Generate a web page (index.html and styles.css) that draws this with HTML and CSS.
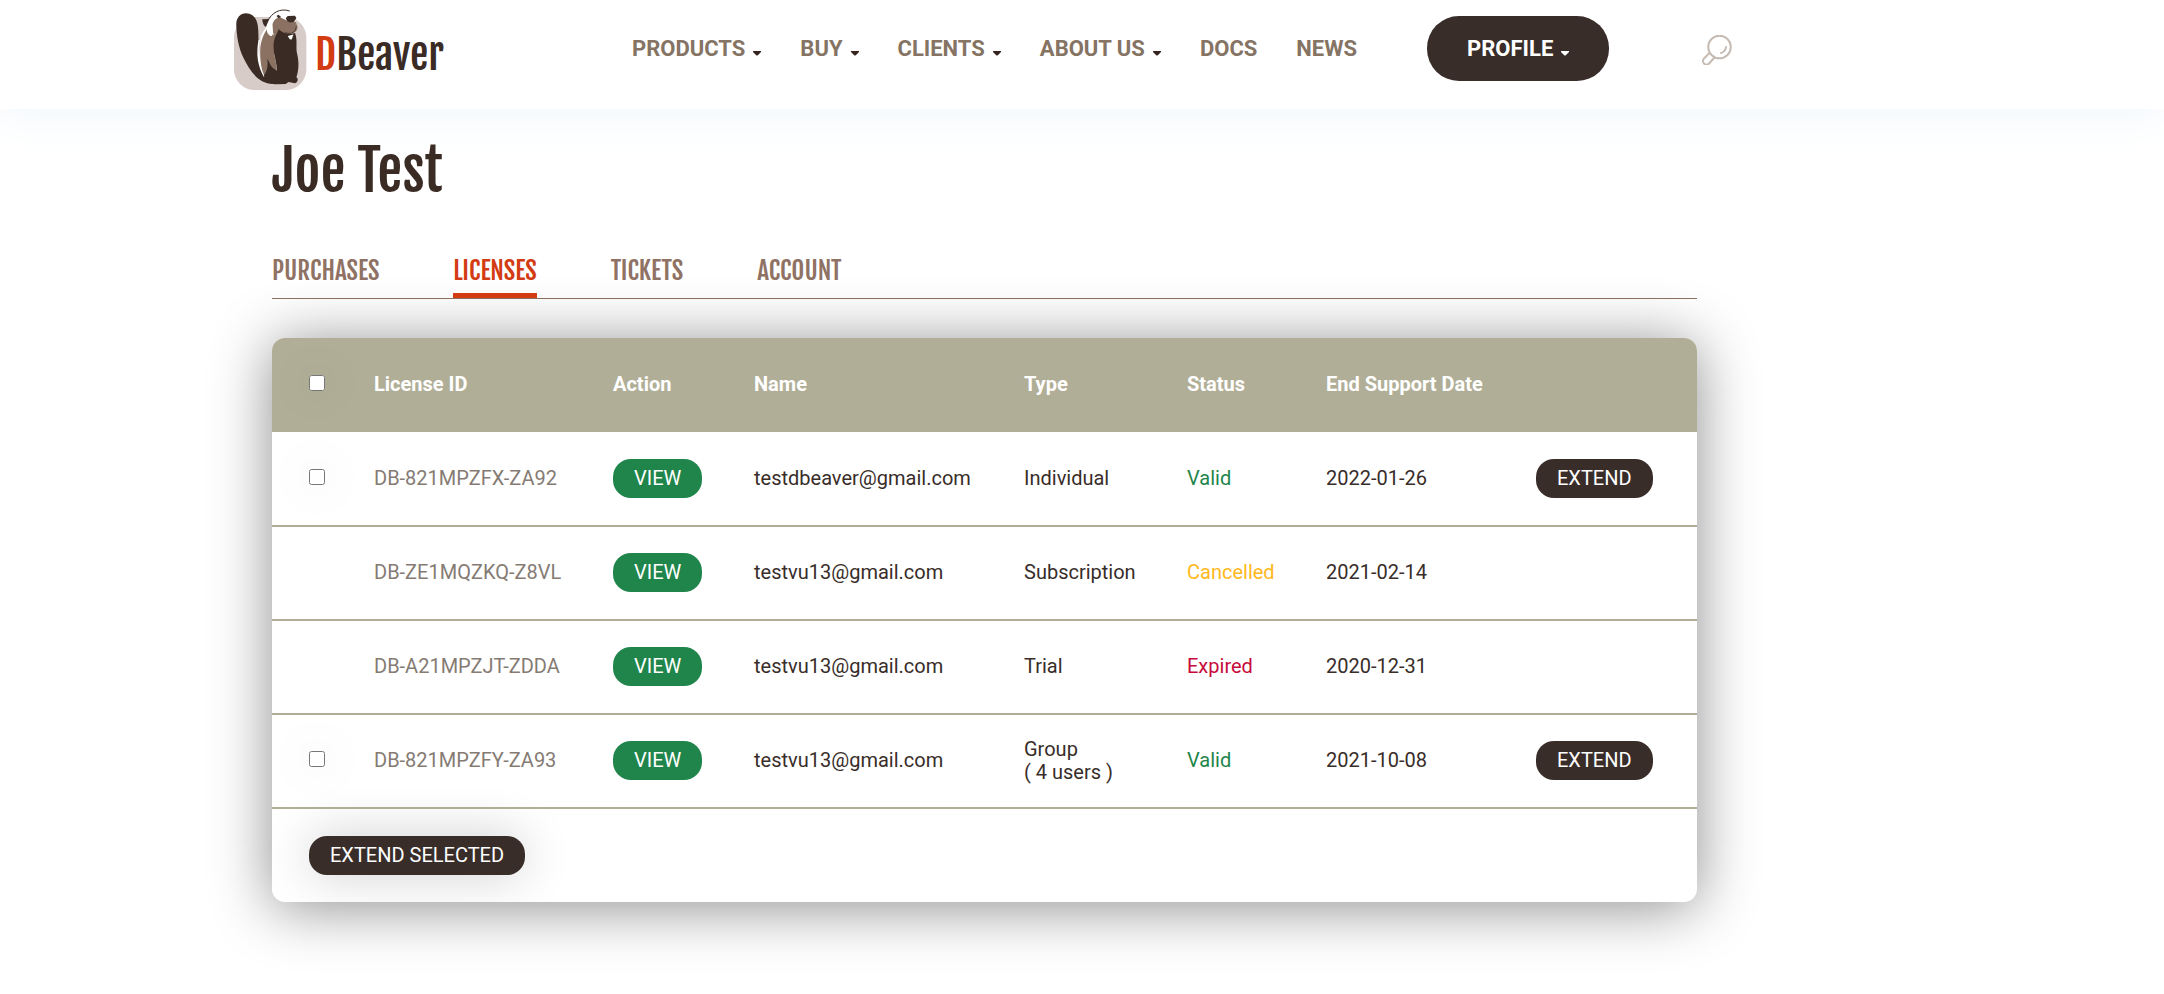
FILE: index.html
```html
<!DOCTYPE html>
<html lang="en">
<head>
<meta charset="utf-8">
<title>DBeaver - Licenses</title>
<link rel="stylesheet" href="styles.css">
</head>
<body>
<header class="site-header">
  <a class="logo" href="#" aria-label="DBeaver">
    <svg class="logo-mark" viewBox="42 24 220 248" aria-hidden="true">
      <rect x="42" y="50" width="218" height="220" rx="62" fill="#d8ccc8"/>
      <path d="M122 110C128 96 136 86 140 78C150 50 170 30 200 29L226 46L230 90L200 106L170 110L130 220L116 200Z" fill="#fff"/>
      <path d="M143 62C156 38 180 22 210 32" fill="none" stroke="#3a2b25" stroke-width="3"/>
      <path d="M127 57L148 56L138 80C131 76 128 68 127 57Z" fill="#3a2b25"/>
      <path d="M49 78C47 54 60 39 78 39C98 40 109 52 113 72C117 94 115 118 117 132C112 160 114 190 134 226L160 252C110 250 88 206 70 172C56 144 50 108 49 78Z" fill="#3a2b25"/>
      <path d="M118 120C110 160 114 196 134 230" fill="none" stroke="#fff" stroke-width="4"/>
      <path d="M143 84C130 104 122 124 121 150C120 186 126 214 136 232L150 200L180 100C158 106 146 104 143 84Z" fill="#8a7162"/>
      <path d="M158 72C162 58 172 50 184 52L204 62L228 64L233 78C236 92 222 100 208 102L190 104L170 108L160 100Z" fill="#8a7162"/>
      <path d="M177 86C172 100 162 112 161 136C160 164 172 186 171 212C160 200 150 190 142 176C146 200 140 216 132 226C138 244 150 252 172 253L198 252L206 246L226 250C236 246 236 236 230 232C238 210 238 184 232 160C228 140 234 120 226 98C214 102 190 102 177 86Z" fill="#3a2b25"/>
      <path d="M151 62C142 80 141 98 154 104" fill="none" stroke="#fff" stroke-width="7" stroke-linecap="round"/>
      <path d="M148 150C142 172 146 200 170 210C172 190 160 164 160 136Z" fill="#8a7162"/>
      <path d="M198 54L204 47L226 46L230 54L222 65L211 67L202 62Z" fill="#3a2b25"/>
      <path d="M170 47L176 43L184 50L176 54Z" fill="#3a2b25"/>
      <path d="M196 96C206 102 218 100 226 92L230 78" fill="none" stroke="#3a2b25" stroke-width="2"/>
      <path d="M204 107L221 103L216 118L210 117Z" fill="#fff"/>
    </svg>
    <span class="logo-text"><span class="logo-accent">D</span>Beaver</span>
  </a>
  <nav class="main-nav">
    <a href="#">PRODUCTS<svg class="caret" viewBox="0 0 8 5"><path d="M0 0h8v1L5 4a1.400 1.400 0 0 1-2 0L0 1z"/></svg></a>
    <a href="#">BUY<svg class="caret" viewBox="0 0 8 5"><path d="M0 0h8v1L5 4a1.400 1.400 0 0 1-2 0L0 1z"/></svg></a>
    <a href="#">CLIENTS<svg class="caret" viewBox="0 0 8 5"><path d="M0 0h8v1L5 4a1.400 1.400 0 0 1-2 0L0 1z"/></svg></a>
    <a href="#">ABOUT US<svg class="caret" viewBox="0 0 8 5"><path d="M0 0h8v1L5 4a1.400 1.400 0 0 1-2 0L0 1z"/></svg></a>
    <a href="#">DOCS</a>
    <a href="#">NEWS</a>
  </nav>
  <button class="profile" type="button">PROFILE<svg class="caret" viewBox="0 0 8 5"><path d="M0 0h8v1L5 4a1.400 1.400 0 0 1-2 0L0 1z"/></svg></button>
  <button class="search" type="button" aria-label="Search">
    <svg viewBox="0 0 30 30" fill="none" stroke="#c6bbb2" stroke-width="2"><circle cx="17.500" cy="12" r="11.300"/><path d="M24 12a7 7 0 0 1-5 6" stroke-linecap="round"/><path d="M7.500 18L2 23.500a3.500 3.500 0 0 0 5 5l5.500-6"/></svg>
  </button>
</header>
<main class="page">
  <h1 class="title">Joe Test</h1>
  <nav class="tabs">
    <a href="#">PURCHASES</a>
    <a href="#" class="active" aria-current="page">LICENSES</a>
    <a href="#">TICKETS</a>
    <a href="#">ACCOUNT</a>
  </nav>
  <section class="card">
    <table class="licenses">
      <colgroup><col class="c-check"><col class="c-id"><col class="c-action"><col class="c-name"><col class="c-type"><col class="c-status"><col class="c-date"><col class="c-extend"></colgroup>
      <thead>
        <tr><th><input type="checkbox" aria-label="Select all licenses"></th><th>License ID</th><th>Action</th><th>Name</th><th>Type</th><th>Status</th><th>End Support Date</th><th></th></tr>
      </thead>
      <tbody>
        <tr><td><input type="checkbox" aria-label="Select DB-821MPZFX-ZA92"></td><td class="id">DB-821MPZFX-ZA92</td><td><button class="pill view" type="button">VIEW</button></td><td>testdbeaver@gmail.com</td><td>Individual</td><td class="valid">Valid</td><td>2022-01-26</td><td><button class="pill" type="button">EXTEND</button></td></tr>
        <tr><td></td><td class="id">DB-ZE1MQZKQ-Z8VL</td><td><button class="pill view" type="button">VIEW</button></td><td>testvu13@gmail.com</td><td>Subscription</td><td class="cancelled">Cancelled</td><td>2021-02-14</td><td></td></tr>
        <tr><td></td><td class="id">DB-A21MPZJT-ZDDA</td><td><button class="pill view" type="button">VIEW</button></td><td>testvu13@gmail.com</td><td>Trial</td><td class="expired">Expired</td><td>2020-12-31</td><td></td></tr>
        <tr><td><input type="checkbox" aria-label="Select DB-821MPZFY-ZA93"></td><td class="id">DB-821MPZFY-ZA93</td><td><button class="pill view" type="button">VIEW</button></td><td>testvu13@gmail.com</td><td>Group<br>( 4 users )</td><td class="valid">Valid</td><td>2021-10-08</td><td><button class="pill" type="button">EXTEND</button></td></tr>
      </tbody>
      <tfoot>
        <tr><td colspan="8"><button class="pill raised" type="button">EXTEND SELECTED</button></td></tr>
      </tfoot>
    </table>
  </section>
</main>
</body>
</html>
```
FILE: styles.css
```css
* { box-sizing: border-box; }

body {
  min-height: 100vh;
  margin: 0;
  background: #fff;
  color: #382d29;
  font-family: Roboto, "Liberation Sans", sans-serif;
  font-size: 20px;
  line-height: 23px;
}

a { text-decoration: none; }

button {
  border: 0;
  cursor: pointer;
  font-family: inherit;
  font-size: inherit;
  line-height: inherit;
}

.site-header {
  display: flex;
  align-items: flex-start;
  height: 109px;
  padding-left: 234px;
  box-shadow: 0 0 50px #ecf3fa;
}

.logo {
  display: flex;
  gap: 8px;
  width: 398px;
  padding-top: 8px;
}

.logo-mark { width: 73px; height: 83px; }

.logo-text {
  padding-top: 27px;
  color: #3a2b25;
  font-family: "Fjalla One", Roboto, sans-serif;
  font-size: 41px;
  line-height: 40px;
}

.logo-accent { color: #d33b12; }

.main-nav {
  display: flex;
  gap: 39px;
  padding-top: 35px;
}

.main-nav a {
  color: #857363;
  font-size: 22px;
  font-weight: 700;
  line-height: 28px;
}

.caret {
  width: 8px;
  height: 5px;
  margin-left: 8px;
  fill: #38231f;
}

.profile {
  height: 65px;
  margin: 16px 0 0 70px;
  padding: 0 40px;
  border-radius: 32px;
  background: #382d29;
  color: #fff;
  font-size: 22px;
  font-weight: 700;
}

.profile .caret { fill: #fff; }

.search {
  width: 30px;
  height: 30px;
  margin: 35px 0 0 93px;
  padding: 0;
  background: none;
}

.search svg { display: block; }

.page {
  max-width: 1697px;
  padding: 28px 0 92px 272px;
}

.title {
  margin: 0;
  color: #3a2b25;
  font-family: "Fjalla One", Roboto, sans-serif;
  font-size: 56px;
  font-weight: 400;
  line-height: 68px;
}

.tabs {
  display: flex;
  gap: 74px;
  margin-top: 47px;
  border-bottom: 1px solid #8f7264;
}

.tabs a {
  padding-bottom: 3px;
  border-bottom: 5px solid transparent;
  color: #8f7264;
  font-family: "Fjalla One", Roboto, sans-serif;
  font-size: 25px;
  line-height: 38px;
}

.tabs .active { border-color: #d33b12; color: #d33b12; }

.card {
  margin-top: 39px;
  overflow: hidden;
  border-radius: 13px;
  background: #fff;
  box-shadow: 0 5px 60px rgba(0, 0, 0, 0.45);
}

.licenses {
  width: 100%;
  border-collapse: collapse;
  table-layout: fixed;
}

.c-check { width: 102px; }
.c-id { width: 239px; }
.c-action { width: 141px; }
.c-name { width: 270px; }
.c-type { width: 163px; }
.c-status { width: 139px; }
.c-date { width: 210px; }

.licenses th,
.licenses td {
  height: 94px;
  padding: 0 0 1px;
  text-align: left;
  vertical-align: middle;
}

.licenses thead { background: #b1ae97; color: #fff; }
.licenses tbody td { border-bottom: 2px solid #b1ae97; }

.licenses th:first-child,
.licenses td:first-child { padding-left: 37px; }

.licenses input {
  display: block;
  width: 16px;
  height: 16px;
  margin: 0 0 3px;
  box-shadow: 0 0 50px rgba(0, 0, 0, 0.15);
}

.licenses .id { color: #857b73; }
.licenses .valid { color: #1f854b; }
.licenses .cancelled { color: #ffb81c; }
.licenses .expired { color: #c70a3a; }

.pill {
  display: block;
  height: 39px;
  padding: 0 21px;
  border-radius: 18px;
  background: #382d29;
  color: #fff;
}

.view { background: #1f854b; }
.raised { box-shadow: 0 0 50px rgba(0, 0, 0, 0.2); }
```
